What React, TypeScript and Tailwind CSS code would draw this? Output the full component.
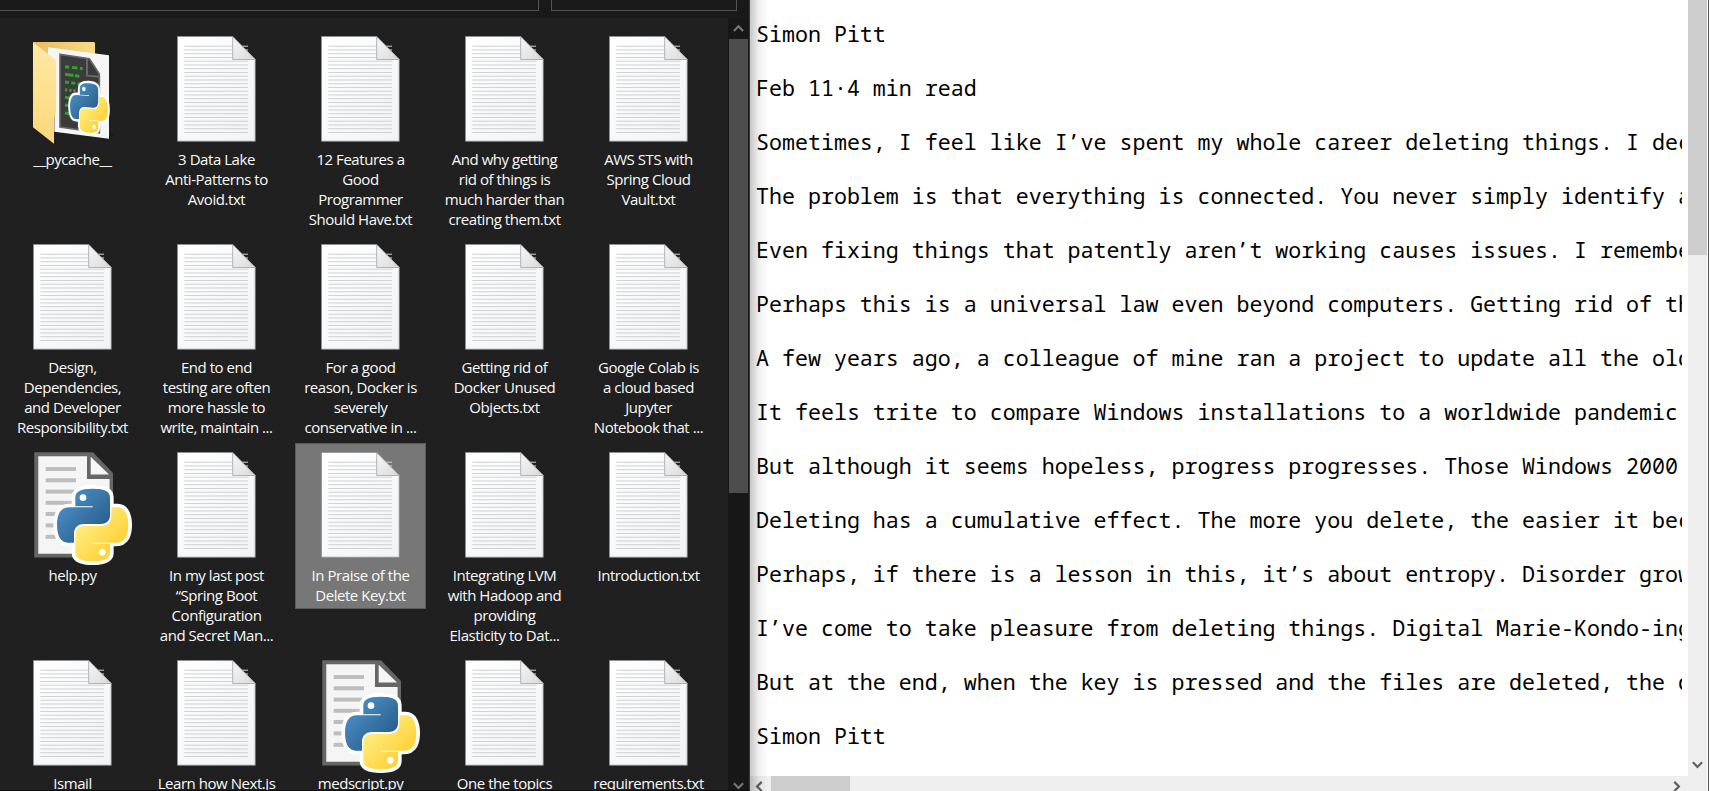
import type { ReactNode } from "react";

type Kind = "txt" | "py" | "folder";
type Item = { kind: Kind; lines: string[]; selected?: boolean };

const items: Item[] = [
  { kind: "folder", lines: ["__pycache__"] },
  { kind: "txt", lines: ["3 Data Lake", "Anti-Patterns to", "Avoid.txt"] },
  { kind: "txt", lines: ["12 Features a", "Good", "Programmer", "Should Have.txt"] },
  { kind: "txt", lines: ["And why getting", "rid of things is", "much harder than", "creating them.txt"] },
  { kind: "txt", lines: ["AWS STS with", "Spring Cloud", "Vault.txt"] },
  { kind: "txt", lines: ["Design,", "Dependencies,", "and Developer", "Responsibility.txt"] },
  { kind: "txt", lines: ["End to end", "testing are often", "more hassle to", "write, maintain ..."] },
  { kind: "txt", lines: ["For a good", "reason, Docker is", "severely", "conservative in ..."] },
  { kind: "txt", lines: ["Getting rid of", "Docker Unused", "Objects.txt"] },
  { kind: "txt", lines: ["Google Colab is", "a cloud based", "Jupyter", "Notebook that ..."] },
  { kind: "py", lines: ["help.py"] },
  { kind: "txt", lines: ["In my last post", "“Spring Boot", "Configuration", "and Secret Man..."] },
  { kind: "txt", lines: ["In Praise of the", "Delete Key.txt"], selected: true },
  { kind: "txt", lines: ["Integrating LVM", "with Hadoop and", "providing", "Elasticity to Dat..."] },
  { kind: "txt", lines: ["Introduction.txt"] },
  { kind: "txt", lines: ["Ismail"] },
  { kind: "txt", lines: ["Learn how Next.js"] },
  { kind: "py", lines: ["medscript.py"] },
  { kind: "txt", lines: ["One the topics"] },
  { kind: "txt", lines: ["requirements.txt"] },
];

const paragraphs = [
  "Simon Pitt",
  "Feb 11·4 min read",
  "Sometimes, I feel like I’ve spent my whole career deleting things. I dec",
  "The problem is that everything is connected. You never simply identify a",
  "Even fixing things that patently aren’t working causes issues. I remember",
  "Perhaps this is a universal law even beyond computers. Getting rid of th",
  "A few years ago, a colleague of mine ran a project to update all the old",
  "It feels trite to compare Windows installations to a worldwide pandemic",
  "But although it seems hopeless, progress progresses. Those Windows 2000",
  "Deleting has a cumulative effect. The more you delete, the easier it bec",
  "Perhaps, if there is a lesson in this, it’s about entropy. Disorder grow",
  "I’ve come to take pleasure from deleting things. Digital Marie-Kondo-ing",
  "But at the end, when the key is pressed and the files are deleted, the d",
  "Simon Pitt",
];

const snake =
  "M278 176C240 176 226 186 226 202L226 229L278 229L278 232L207 232C181 232 171 254 171 285C171 316 182 338 203 338L222 338L222 312C222 294 233 282 252 282L303 282C320 282 330 271 330 255L330 202C330 186 316 176 278 176Z";

function Defs() {
  return (
    <svg className="absolute h-0 w-0" aria-hidden="true">
      <defs>
        <linearGradient id="paper" x1="0" y1="0" x2="1" y2="1">
          <stop offset="0" stopColor="#ffffff" />
          <stop offset="1" stopColor="#f1f3f6" />
        </linearGradient>
        <linearGradient id="curl" x1="0" y1="0" x2="1" y2="1">
          <stop offset="0" stopColor="#f7f7f7" />
          <stop offset="1" stopColor="#d9d9da" />
        </linearGradient>
        <linearGradient id="blue" x1="0" y1="0" x2="1" y2="1">
          <stop offset="0.1" stopColor="#4e92c8" />
          <stop offset="0.8" stopColor="#2a608f" />
        </linearGradient>
        <linearGradient id="yellow" x1="1" y1="1" x2="0" y2="0">
          <stop offset="0.3" stopColor="#ffe873" />
          <stop offset="0.8" stopColor="#ffd031" />
        </linearGradient>
        <linearGradient id="flap" x1="0" y1="0" x2="0" y2="1">
          <stop offset="0" stopColor="#ffe9a8" />
          <stop offset="1" stopColor="#fbd877" />
        </linearGradient>
        <linearGradient id="folderBack" x1="0" y1="0" x2="1" y2="0">
          <stop offset="0" stopColor="#e6bd5c" />
          <stop offset="1" stopColor="#f7d987" />
        </linearGradient>
      </defs>
    </svg>
  );
}

function Snakes() {
  return (
    <>
      <g fill="#fff" stroke="#fff" strokeWidth="22" strokeLinejoin="round">
        <path d={snake} />
        <path d={snake} transform="rotate(180 278 285)" />
      </g>
      <path d={snake} fill="url(#blue)" />
      <path d={snake} fill="url(#yellow)" transform="rotate(180 278 285)" />
      <circle cx="249" cy="203" r="10" fill="#fff" />
      <circle cx="307" cy="367" r="10" fill="#fff" />
    </>
  );
}

function IconFrame({ children }: { children: ReactNode }) {
  return (
    <svg viewBox="0 0 79 105" className="h-[105px] w-[79px] shrink-0 overflow-visible">
      {children}
    </svg>
  );
}

const rules = Array.from({ length: 24 }, (_, i) => 10 + i * 3.75);

function TxtIcon() {
  return (
    <IconFrame>
      <path d="M0.5 0.5H55.8L78.2 23.3V105.2H0.5Z" fill="url(#paper)" stroke="#8f9092" strokeWidth="0.8" />
      {rules.map((y) => (
        <rect key={y} x="7.3" y={y - 0.3} width="63.7" height="1" fill="#cfd0d2" />
      ))}
      <path d="M55.7 0.8V23.5H78.2Z" fill="url(#curl)" stroke="#a9aaac" strokeWidth="0.9" />
    </IconFrame>
  );
}

const bars = [17, 28.3, 39.6, 50.8, 62, 73.4, 84.8];

function PyIcon() {
  return (
    <IconFrame>
      <path d="M1.3 0.2H60L80 21V105.6H1.3Z" fill="#666666" />
      <path d="M5.3 4.2H54V27H76.6V101.8H5.3Z" fill="#f5f5f5" />
      <path d="M57.7 4.8L76 22.6H57.7Z" fill="#f5f5f5" />
      {bars.map((y) => (
        <rect key={y} x="12.7" y={y - 2} width="30.3" height="4" fill="#bdbdbd" />
      ))}
      <g transform="translate(-33 -22) scale(0.33333)">
        <Snakes />
      </g>
    </IconFrame>
  );
}

function FolderIcon() {
  return (
    <IconFrame>
      <g transform="translate(-33 -36) scale(0.33333)">
        <path d="M99 126H283L285 130V260H99Z" fill="url(#folderBack)" />
        <path d="M327 396L345 404L327 416L240 410Z" fill="#1a1a1a" />
        <path d="M144 142L327 166V416L163 395V220L144 200Z" fill="#f6f6f6" />
        <path d="M180 163L268 176L298 222V398L180 381Z" fill="#3b3b3b" stroke="#686868" strokeWidth="5" />
        <path d="M261 177V227L297 230" fill="none" stroke="#686868" strokeWidth="6" />
        <g stroke="#31a031" strokeWidth="9" fill="none">
          <path d="M195 200L248 206" strokeDasharray="13 8 17 7" />
          <path d="M195 223L238 229" strokeDasharray="26 4" />
          <path d="M195 246L240 252" strokeDasharray="12 7" />
          <path d="M195 269L240 274" strokeDasharray="7 6 7 5" />
          <path d="M195 292L222 296" strokeDasharray="14 5" />
          <path d="M195 315L222 319" strokeDasharray="10 4" />
          <path d="M195 339L222 343" strokeDasharray="19 4" />
        </g>
        <g transform="translate(267 324) skewY(4) scale(0.53 0.68) translate(-278 -285)">
          <Snakes />
        </g>
        <path d="M99 127L168 181V338L162 350V431L99 382Z" fill="url(#flap)" />
      </g>
    </IconFrame>
  );
}

function FileTile({ item }: { item: Item }) {
  return (
    <div className="flex h-[208px] pl-[7px]">
      <div
        className={
          item.selected
            ? "flex h-[166px] w-[131px] flex-col items-center bg-[#777777] pt-[9px] outline-1 -outline-offset-1 outline-[#5b5b5b]"
            : "flex w-[131px] flex-col items-center pt-[9px]"
        }
      >
        {item.kind === "txt" && <TxtIcon />}
        {item.kind === "py" && <PyIcon />}
        {item.kind === "folder" && <FolderIcon />}
        <div className="mt-2 flex flex-col items-center text-[15px] leading-5 tracking-[-0.45px] whitespace-nowrap text-[#fafafa]">
          {item.lines.map((line) => (
            <span key={line}>{line}</span>
          ))}
        </div>
      </div>
    </div>
  );
}

function Chevron({ className, d }: { className: string; d: string }) {
  return (
    <svg viewBox="0 0 10 10" className={className}>
      <path d={d} fill="none" stroke="currentColor" strokeWidth="2" />
    </svg>
  );
}

function Explorer() {
  return (
    <section className="flex h-full w-[750px] shrink-0 flex-col border-r border-b border-r-[#3a3a3a] border-b-[#0c0c0c] bg-[#202020] font-['Open_Sans','Noto_Sans',sans-serif]">
      <div className="flex h-[18px] shrink-0 items-start gap-3 bg-[#191919]">
        <div className="h-[11px] w-[539px] border-r border-b border-[#535353]" />
        <div className="h-[11px] w-[186px] border-x border-b border-[#535353]" />
      </div>
      <div className="flex min-h-0 flex-1">
        <div className="w-[728px] overflow-hidden pt-[9px]">
          <div className="grid w-[720px] grid-cols-5">
            {items.map((item) => (
              <FileTile key={item.lines.join(" ")} item={item} />
            ))}
          </div>
        </div>
        <div className="flex flex-1 flex-col items-center justify-between bg-[#171717]">
          <div className="flex flex-col items-center">
            <div className="flex h-[21px] items-center text-[#777777]">
              <Chevron className="size-[11px]" d="M0.8 7.2L5 3L9.2 7.2" />
            </div>
            <div className="h-[454px] w-[19px] bg-[#4d4d4d]" />
          </div>
          <Chevron className="-mb-px size-[11px] text-[#777777]" d="M0.8 3L5 7.2L9.2 3" />
        </div>
      </div>
    </section>
  );
}

function Editor() {
  return (
    <section className="relative flex h-full min-w-0 flex-1 flex-col border-r border-[#555555] bg-white">
      <div className="flex min-h-0 flex-1">
        <div className="mr-[6px] min-w-0 flex-1 overflow-hidden pt-[7px] pl-[6px] font-['Noto_Sans_Mono','DejaVu_Sans_Mono',monospace] text-[21.65px] leading-[54px] whitespace-pre text-black">
          {paragraphs.map((text, i) => (
            <p key={i}>{text}</p>
          ))}
        </div>
        <div className="mr-px flex w-[19px] flex-col items-center justify-between bg-[#efefef]">
          <div className="h-[255px] w-full bg-[#cdcdcd]" />
          <Chevron className="mb-[6px] size-[11px] text-[#606060]" d="M0.8 3L5 7.2L9.2 3" />
        </div>
      </div>
      <div className="mr-px flex h-[15px] items-center bg-[#efefef] text-[#606060]">
        <div className="flex w-[21px] justify-center pt-[5px] pr-[3px]">
          <Chevron className="size-[11px]" d="M7 0.8L2.8 5L7 9.2" />
        </div>
        <div className="h-full w-[79px] bg-[#cdcdcd]" />
        <Chevron className="mt-[5px] mr-[25px] ml-auto size-[11px]" d="M3 0.8L7.2 5L3 9.2" />
      </div>
      <div className="pointer-events-none absolute inset-y-0 left-0 w-[18px] bg-linear-to-r from-black/22 via-black/6 to-transparent" />
    </section>
  );
}

export default function App() {
  return (
    <main className="relative flex h-[791px] w-[1709px] overflow-hidden bg-white">
      <Defs />
      <Explorer />
      <Editor />
    </main>
  );
}
